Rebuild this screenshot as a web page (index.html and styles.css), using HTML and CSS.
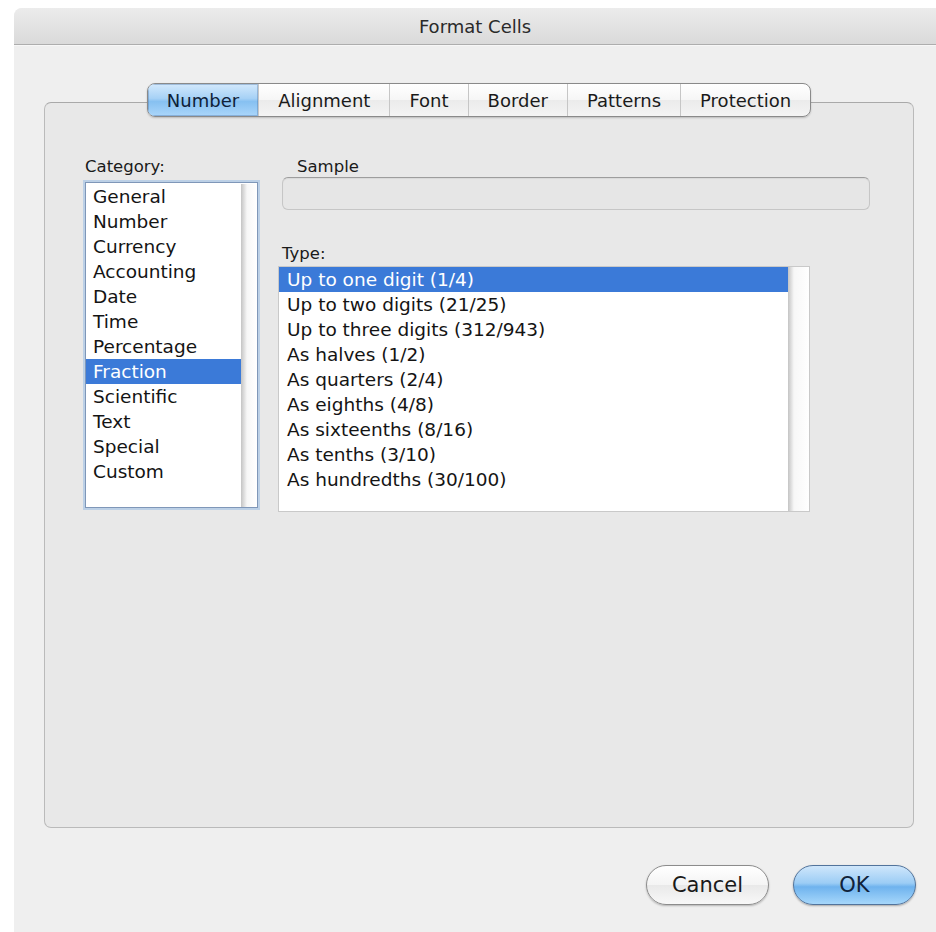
FILE: index.html
```html
<!DOCTYPE html>
<html lang="en">
<head>
<meta charset="utf-8">
<title>Format Cells</title>
<link rel="stylesheet" href="styles.css">
</head>
<body>
<div class="window">
  <div class="titlebar">Format Cells</div>
  <div class="sheet">
    <div class="group">
      <div class="tabs">
        <div class="tab active">Number</div>
        <div class="tab">Alignment</div>
        <div class="tab">Font</div>
        <div class="tab">Border</div>
        <div class="tab">Patterns</div>
        <div class="tab">Protection</div>
      </div>
      <div class="panel">
        <div class="col-left">
          <div class="label cat-label">Category:</div>
          <div class="listbox cat-list focused">
            <div class="items">
              <div class="row">General</div>
              <div class="row">Number</div>
              <div class="row">Currency</div>
              <div class="row">Accounting</div>
              <div class="row">Date</div>
              <div class="row">Time</div>
              <div class="row">Percentage</div>
              <div class="row selected">Fraction</div>
              <div class="row">Scientific</div>
              <div class="row">Text</div>
              <div class="row">Special</div>
              <div class="row">Custom</div>
            </div>
            <div class="track"></div>
          </div>
        </div>
        <div class="col-right">
          <div class="label sample-label">Sample</div>
          <div class="sample-box"></div>
          <div class="label type-label">Type:</div>
          <div class="listbox type-list">
            <div class="items">
              <div class="row selected">Up to one digit (1/4)</div>
              <div class="row">Up to two digits (21/25)</div>
              <div class="row">Up to three digits (312/943)</div>
              <div class="row">As halves (1/2)</div>
              <div class="row">As quarters (2/4)</div>
              <div class="row">As eighths (4/8)</div>
              <div class="row">As sixteenths (8/16)</div>
              <div class="row">As tenths (3/10)</div>
              <div class="row">As hundredths (30/100)</div>
            </div>
            <div class="track wide"></div>
          </div>
        </div>
      </div>
    </div>
    <div class="actions">
      <button class="btn cancel">Cancel</button>
      <button class="btn ok">OK</button>
    </div>
  </div>
</div>
</body>
</html>
```

FILE: styles.css
```css
* { box-sizing: border-box; }

body {
  margin: 0;
  background: #ffffff;
  font-family: "DejaVu Sans", "Liberation Sans", sans-serif;
  color: #111111;
}

/* sheet window */
.window {
  margin: 8px 0 0 14px;
  height: 924px;
  background: #efefef;
  border-top-left-radius: 8px;
  overflow: hidden;
}

.titlebar {
  height: 37px;
  background: linear-gradient(#ececec, #dadada);
  border-bottom: 1px solid #adadad;
  box-shadow: 0 1px 0 #f7f7f7;
  text-align: center;
  font-size: 18px;
  line-height: 37px;
  color: #2a2a2a;
}

.sheet {
  padding: 57px 22px 0 30px;
}

/* tabbed group box */
.group {
  height: 726px;
  border: 1px solid #bababa;
  border-top-color: #a9a9a9;
  border-radius: 7px;
  background: #e8e8e8;
  display: flex;
  flex-direction: column;
}

.tabs {
  align-self: center;
  margin-top: -20px;
  height: 34px;
  display: flex;
  border: 1px solid #8a8a8a;
  border-radius: 8px;
  overflow: hidden;
  background: linear-gradient(#ffffff, #f6f6f6 50%, #ebebeb 51%, #f4f4f4);
  box-shadow: 0 1px 2px rgba(0, 0, 0, 0.2);
  font-size: 18px;
  color: #1a1a1a;
}

.tab {
  display: flex;
  align-items: center;
  padding: 0 19px;
  border-left: 1px solid #c6c6c6;
}

.tab:first-child { border-left: none; }

.tab.active {
  background: linear-gradient(#d3e9fc, #a6d1f6 45%, #86c0f1 55%, #aad6fa);
  color: #0f2138;
  box-shadow: inset 0 0 0 1px rgba(70, 110, 160, 0.35);
}

/* two-column panel */
.panel {
  display: grid;
  grid-template-columns: 173px 592px;
  column-gap: 20px;
  margin: 40px 0 0 40px;
}

.label {
  height: 20px;
  font-size: 16.5px;
  line-height: 20px;
  color: #1a1a1a;
  white-space: nowrap;
}

.cat-label { margin-bottom: 5px; }

.sample-label {
  padding-left: 19px;
}

.sample-box {
  margin-left: 4px;
  height: 33px;
  border: 1px solid #c6c6c6;
  border-top-color: #9d9d9d;
  border-radius: 6px;
  background: #e6e6e6;
  box-shadow: inset 0 1px 1px rgba(0, 0, 0, 0.06);
}

.type-label {
  margin-top: 34px;
  margin-bottom: 2px;
  padding-left: 4px;
}

/* list boxes */
.listbox {
  display: flex;
  background: #ffffff;
  border: 1px solid #c9c9c9;
}

.cat-list {
  width: 173px;
  height: 326px;
  padding-top: 1px;
}

.focused {
  border-color: #7f97b8;
  box-shadow: 0 0 0 2px #bcd0e6;
}

.type-list {
  width: 532px;
  height: 246px;
}

.items {
  flex: 1;
  min-width: 0;
}

.row {
  height: 25px;
  line-height: 25px;
  font-size: 18.5px;
  white-space: nowrap;
  color: #141414;
  padding-left: 7px;
}

.type-list .row { padding-left: 8px; }

.row.selected {
  background: #3b7ad8;
  color: #ffffff;
}

.track {
  width: 16px;
  background: linear-gradient(to right, #c4c4c4, #dddddd 3px, #f7f7f7 6px, #ffffff);
}

.track.wide { width: 21px; }

/* dialog buttons */
.actions {
  display: flex;
  justify-content: flex-end;
  gap: 24px;
  margin: 37px -2px 0 0;
}

.btn {
  width: 123px;
  height: 40px;
  border-radius: 20px;
  font-family: "DejaVu Sans", "Liberation Sans", sans-serif;
  font-size: 21px;
  display: flex;
  align-items: center;
  justify-content: center;
  padding: 0;
}

.cancel {
  border: 1px solid #8c8c8c;
  background: linear-gradient(#ffffff, #f4f4f4 50%, #e9e9e9 51%, #f8f8f8);
  box-shadow: 0 1px 2px rgba(0, 0, 0, 0.25);
  color: #1a1a1a;
}

.ok {
  border: 1px solid #52749c;
  background: linear-gradient(#cfe6fb, #9ccdf5 45%, #6fb3ee 55%, #a6d7fb);
  box-shadow: 0 1px 2px rgba(0, 0, 0, 0.3);
  color: #10223a;
}
```
